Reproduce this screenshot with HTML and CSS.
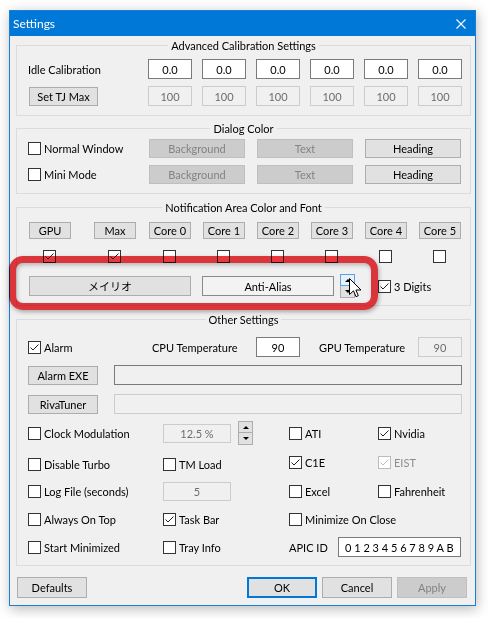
FILE: index.html
```html
<!DOCTYPE html>
<html lang="en">
<head>
<meta charset="utf-8">
<title>Settings</title>
<link rel="stylesheet" href="styles.css">
</head>
<body>
<div class="screen">
  <div class="window">
    <div class="titlebar">
      <span class="title">Settings</span>
      <svg class="close" width="10" height="10" viewBox="0 0 10 10"><path d="M0.5 0.5L9.5 9.5M9.5 0.5L0.5 9.5"/></svg>
    </div>
    <div class="client">
      <section class="group g-adv">
        <div class="gtitle">Advanced Calibration Settings</div>
        <div class="row r-idle">
          <div class="lead"><span>Idle Calibration</span></div>
          <div class="fields">
            <span class="edit">0.0</span><span class="edit">0.0</span><span class="edit">0.0</span><span class="edit">0.0</span><span class="edit">0.0</span><span class="edit">0.0</span>
          </div>
        </div>
        <div class="row r-tj">
          <div class="lead"><span class="btn b-tj">Set TJ Max</span></div>
          <div class="fields">
            <span class="edit dis">100</span><span class="edit dis">100</span><span class="edit dis">100</span><span class="edit dis">100</span><span class="edit dis">100</span><span class="edit dis">100</span>
          </div>
        </div>
      </section>

      <section class="group g-dlg">
        <div class="gtitle">Dialog Color</div>
        <div class="row r-dc1">
          <div class="lead wide"><span class="cl"><span class="cb"></span>Normal Window</span></div>
          <div class="dbtns">
            <span class="btn w96 dis">Background</span><span class="btn w96 dis">Text</span><span class="btn w96">Heading</span>
          </div>
        </div>
        <div class="row r-dc2">
          <div class="lead wide"><span class="cl"><span class="cb"></span>Mini Mode</span></div>
          <div class="dbtns">
            <span class="btn w96 dis">Background</span><span class="btn w96 dis">Text</span><span class="btn w96">Heading</span>
          </div>
        </div>
      </section>

      <section class="group g-notif">
        <div class="gtitle">Notification Area Color and Font</div>
        <div class="cgrid">
          <span class="btn core">GPU</span><span class="btn core">Max</span><span class="btn core">Core 0</span><span class="btn core">Core 1</span><span class="btn core">Core 2</span><span class="btn core">Core 3</span><span class="btn core">Core 4</span><span class="btn core">Core 5</span>
          <span class="cb on"><svg viewBox="0 0 11 11"><path d="M1.5 5.5L4 8L9.5 2.5"/></svg></span>
          <span class="cb on"><svg viewBox="0 0 11 11"><path d="M1.5 5.5L4 8L9.5 2.5"/></svg></span>
          <span class="cb"></span><span class="cb"></span><span class="cb"></span><span class="cb"></span><span class="cb"></span><span class="cb"></span>
        </div>
        <div class="row r-font">
          <span class="btn b-font">メイリオ</span>
          <span class="btn b-aa">Anti-Alias</span>
          <span class="spin s-aa"><span class="up hover"><i class="tri-up"></i></span><span class="dn"><i class="tri-dn"></i></span></span>
          <span class="cl c-3d"><span class="cb on"><svg viewBox="0 0 11 11"><path d="M1.5 5.5L4 8L9.5 2.5"/></svg></span>3 Digits</span>
        </div>
      </section>

      <section class="group g-oth">
        <div class="gtitle">Other Settings</div>
        <div class="r-alarm">
          <span class="cl"><span class="cb on"><svg viewBox="0 0 11 11"><path d="M1.5 5.5L4 8L9.5 2.5"/></svg></span>Alarm</span>
          <span>CPU Temperature</span>
          <span class="edit">90</span>
          <span>GPU Temperature</span>
          <span class="edit dis">90</span>
        </div>
        <div class="row r-path">
          <span class="btn b-path">Alarm EXE</span>
          <span class="field"></span>
        </div>
        <div class="row r-path r-riva">
          <span class="btn b-path">RivaTuner</span>
          <span class="field dis"></span>
        </div>

        <div class="lrow lr1">
          <span class="cl"><span class="cb"></span>Clock Modulation</span>
          <span class="pair">
            <span class="edit dis e-num">12.5 %</span>
            <span class="spin s-clk"><span class="up"><i class="tri-up"></i></span><span class="dn"><i class="tri-dn"></i></span></span>
          </span>
          <span class="cl"><span class="cb"></span>ATI</span>
          <span class="cl"><span class="cb on"><svg viewBox="0 0 11 11"><path d="M1.5 5.5L4 8L9.5 2.5"/></svg></span>Nvidia</span>
        </div>
        <div class="lrow lr2">
          <span class="cl"><span class="cb"></span>Disable Turbo</span>
          <span class="cl"><span class="cb"></span>TM Load</span>
          <span class="cl up2"><span class="cb on"><svg viewBox="0 0 11 11"><path d="M1.5 5.5L4 8L9.5 2.5"/></svg></span>C1E</span>
          <span class="cl up2 off"><span class="cb on dis"><svg viewBox="0 0 11 11"><path d="M1.5 5.5L4 8L9.5 2.5"/></svg></span>EIST</span>
        </div>
        <div class="lrow lr3">
          <span class="cl"><span class="cb"></span>Log File (seconds)</span>
          <span class="edit dis e-num">5</span>
          <span class="cl"><span class="cb"></span>Excel</span>
          <span class="cl"><span class="cb"></span>Fahrenheit</span>
        </div>
        <div class="lrow lr4">
          <span class="cl"><span class="cb"></span>Always On Top</span>
          <span class="cl"><span class="cb on"><svg viewBox="0 0 11 11"><path d="M1.5 5.5L4 8L9.5 2.5"/></svg></span>Task Bar</span>
          <span class="cl span2"><span class="cb"></span>Minimize On Close</span>
        </div>
        <div class="lrow lr5">
          <span class="cl"><span class="cb"></span>Start Minimized</span>
          <span class="cl"><span class="cb"></span>Tray Info</span>
          <span class="apic span2"><span class="apic-lbl">APIC ID</span><span class="edit e-apic">0 1 2 3 4 5 6 7 8 9 A B</span></span>
        </div>
      </section>

      <div class="bbar">
        <span class="btn bb">Defaults</span>
        <span class="spacer"></span>
        <span class="btn bb ok">OK</span>
        <span class="btn bb">Cancel</span>
        <span class="btn bb dis">Apply</span>
      </div>
    </div>
  </div>

  <div class="highlight"></div>
  <svg class="cursor" width="13" height="20" viewBox="0 0 13 20"><path d="M0.5 0.5L0.5 16.5L4.5 12.8L7 18.7L9.3 17.7L6.9 12L12 12Z"/></svg>
</div>
</body>
</html>
```

FILE: styles.css
```css
* { box-sizing: border-box; }
html, body { margin: 0; background: #ffffff; }
body {
  font-family: Lato, "Noto Sans CJK JP", sans-serif;
  font-size: 11px;
  color: #000;
}
.screen {
  position: relative;
  width: 488px;
  height: 618px;
  padding: 10px 0 0 9px;
  overflow: hidden;
}
.window {
  width: 467px;
  height: 596px;
  border: 1px solid #1a7fd4;
  background: #f0f0f0;
  display: flex;
  flex-direction: column;
  box-shadow: 1px 3px 12px rgba(0, 0, 0, 0.28);
}
.titlebar {
  height: 25px;
  flex: none;
  background: #0078d7;
  color: #fff;
  display: flex;
  align-items: center;
  padding: 0 9px 0 3px;
  font-size: 12px;
}
.title { flex: 1; }
.close { stroke: #fff; stroke-width: 1.1; fill: none; }
.client { flex: 1; padding: 9px 4px 0 6px; }

.group { border: 1px solid #dcdcdc; }
.gtitle {
  width: fit-content;
  margin: -8px auto 0;
  padding: 0 3px;
  line-height: 15px;
  background: #f0f0f0;
}
.row { display: flex; align-items: center; }
.lead { width: 131px; flex: none; padding-left: 11px; display: flex; align-items: center; }
.lead.wide { width: 132px; }
.fields { display: flex; gap: 10px; }

.edit {
  width: 44px;
  height: 20px;
  border: 1px solid #7a7a7a;
  background: #fff;
  display: flex;
  align-items: center;
  justify-content: center;
  flex: none;
}
.edit.dis { border-color: #cccccc; background: #f0f0f0; color: #6d6d6d; }

.btn {
  display: flex;
  align-items: center;
  justify-content: center;
  background: #e1e1e1;
  border: 1px solid #adadad;
  flex: none;
  white-space: nowrap;
}
.btn.dis { background: #cccccc; border-color: #bfbfbf; color: #838383; }

.cb {
  width: 13px;
  height: 13px;
  border: 1px solid #333333;
  background: #fff;
  flex: none;
  display: inline-flex;
}
.cb svg { width: 11px; height: 11px; fill: none; stroke: #222; stroke-width: 1; }
.cb.dis { border-color: #bcbcbc; }
.cb.dis svg { stroke: #bcbcbc; }
.cl { display: flex; align-items: center; gap: 3px; white-space: nowrap; }
.cl.off { color: #8d8d8d; }

/* group 1 */
.g-adv { height: 71px; }
.r-idle { margin-top: 6px; height: 20px; }
.r-tj { margin-top: 7px; height: 20px; }
.b-tj { width: 69px; height: 19px; margin-left: 1px; }

/* group 2 */
.g-dlg { margin-top: 12px; height: 66px; }
.r-dc1 { margin-top: 3px; height: 19px; }
.r-dc2 { margin-top: 7px; height: 19px; }
.dbtns { display: flex; gap: 12px; }
.w96 { width: 96px; height: 19px; }

/* group 3 */
.g-notif { margin-top: 13px; height: 99px; }
.cgrid {
  display: grid;
  grid-template-columns: 65px 55px repeat(5, 54px) 42px;
  grid-template-rows: 17px 13px;
  row-gap: 11px;
  margin: 7px 0 0 12px;
}
.core { width: 42px; height: 17px; }
.cgrid .cb { margin-left: 14px; }
.r-font { margin-top: 13px; height: 20px; padding-left: 12px; }
.b-font { width: 162px; height: 20px; font-family: "Noto Sans CJK JP", sans-serif; font-size: 11px; }
.b-aa { width: 132px; height: 20px; margin-left: 11px; background: #f3f3f3; border-color: #8a8a8a; }
.s-aa { margin-left: 6px; }
.c-3d { margin-left: 23px; }

.spin { display: flex; flex-direction: column; width: 15px; flex: none; }
.spin .up, .spin .dn {
  height: 12px;
  border: 1px solid #adadad;
  background: #e1e1e1;
  display: flex;
  align-items: center;
  justify-content: center;
}
.spin .dn { border-top: none; height: 12px; }
.spin .up.hover { border-color: #5fa2e3; background: #e5f1fb; }
.tri-up, .tri-dn { width: 0; height: 0; border-left: 3px solid transparent; border-right: 3px solid transparent; }
.tri-up { border-bottom: 3px solid #000; }
.tri-dn { border-top: 3px solid #000; }

/* group 4 */
.g-oth { margin-top: 13px; height: 247px; }
.r-alarm {
  margin-top: 10px;
  height: 20px;
  display: grid;
  grid-template-columns: 124px 104px 63px 99px 44px;
  align-items: center;
  padding-left: 11px;
}
.r-path { margin-top: 8px; height: 20px; padding-left: 11px; gap: 16px; }
.r-riva { margin-top: 9px; }
.b-path { width: 70px; height: 19px; }
.field { width: 348px; height: 20px; border: 1px solid #7a7a7a; background: #f0f0f0; }
.field.dis { border-color: #cccccc; }

.lrow {
  display: grid;
  grid-template-columns: 135px 126px 89px 83px;
  align-items: center;
  padding-left: 11px;
  height: 20px;
}
.lr1 { height: 24px; margin-top: 7px; }
.lr2 { margin-top: 9px; }
.lr3 { margin-top: 7px; }
.lr4, .lr5 { margin-top: 8px; }
.up2 { margin-top: -4px; }
.span2 { grid-column: span 2; }
.pair { display: flex; align-items: center; gap: 7px; }
.e-num { width: 68px; height: 19px; }
.s-clk .up, .s-clk .dn { height: 12px; }
.apic { display: flex; align-items: center; }
.apic-lbl { width: 50px; }
.e-apic { width: 123px; justify-content: flex-start; padding-left: 6px; }

/* bottom */
.bbar { display: flex; margin-top: 11px; height: 21px; padding: 0 4px 0 1px; gap: 5px; }
.bb { width: 70px; height: 21px; }
.spacer { flex: 1; }
.ok { border: 2px solid #0078d7; }

/* overlays */
.highlight {
  position: absolute;
  left: 9px;
  top: 256px;
  width: 369px;
  height: 54px;
  border: 7px solid #e8383d;
  border-radius: 14px;
  mix-blend-mode: multiply;
  box-shadow: 1px 2px 4px rgba(0, 0, 0, 0.3), inset 1px 2px 4px rgba(0, 0, 0, 0.25);
}
.cursor {
  position: absolute;
  left: 349px;
  top: 278px;
  fill: #fff;
  stroke: #000;
  stroke-width: 1;
}
```
